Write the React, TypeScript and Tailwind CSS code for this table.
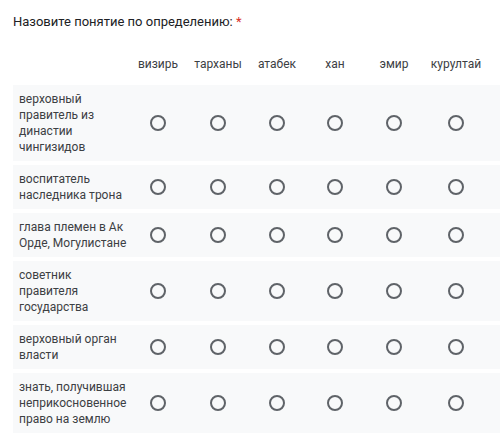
import React from 'react'

const columns = ['визирь', 'тарханы', 'атабек', 'хан', 'эмир', 'курултай']

const rows = [
  'верховный правитель из династии чингизидов',
  'воспитатель наследника трона',
  'глава племен в Ак Орде, Могулистане',
  'советник правителя государства',
  'верховный орган власти',
  'знать, получившая неприкосновенное право на землю',
]

const gridCols = 'grid grid-cols-[115px_60px_60px_58px_58px_60px_64px]'

function Radio() {
  return (
    <div className="flex items-center justify-center">
      <span className="block h-[16px] w-[16px] rounded-full border-2 border-[#5f6368]" />
    </div>
  )
}

export default function App() {
  return (
    <div
      className="h-[444px] w-[500px] bg-white pl-[13px] text-[#202124]"
      style={{ fontFamily: 'Roboto, "Noto Sans", sans-serif' }}
    >
      <div className="pt-[12px] text-[13px] leading-[20px]">
        Назовите понятие по определению: <span className="text-[#d93025]">*</span>
      </div>

      <div className={`${gridCols} mt-[23px] h-[18px] items-center text-[12px] text-[#3c4043]`}>
        <div />
        {columns.map((c) => (
          <div key={c} className="text-center">
            {c}
          </div>
        ))}
      </div>

      <div className="mt-[12px] flex flex-col gap-[4px]">
        {rows.map((r) => (
          <div key={r} className={`${gridCols} items-center bg-[#f8f9fa] py-[6px]`}>
            <div className="pl-[6px] text-[12px] leading-[16px] text-[#3c4043]">{r}</div>
            {columns.map((c) => (
              <Radio key={c} />
            ))}
          </div>
        ))}
      </div>
    </div>
  )
}
